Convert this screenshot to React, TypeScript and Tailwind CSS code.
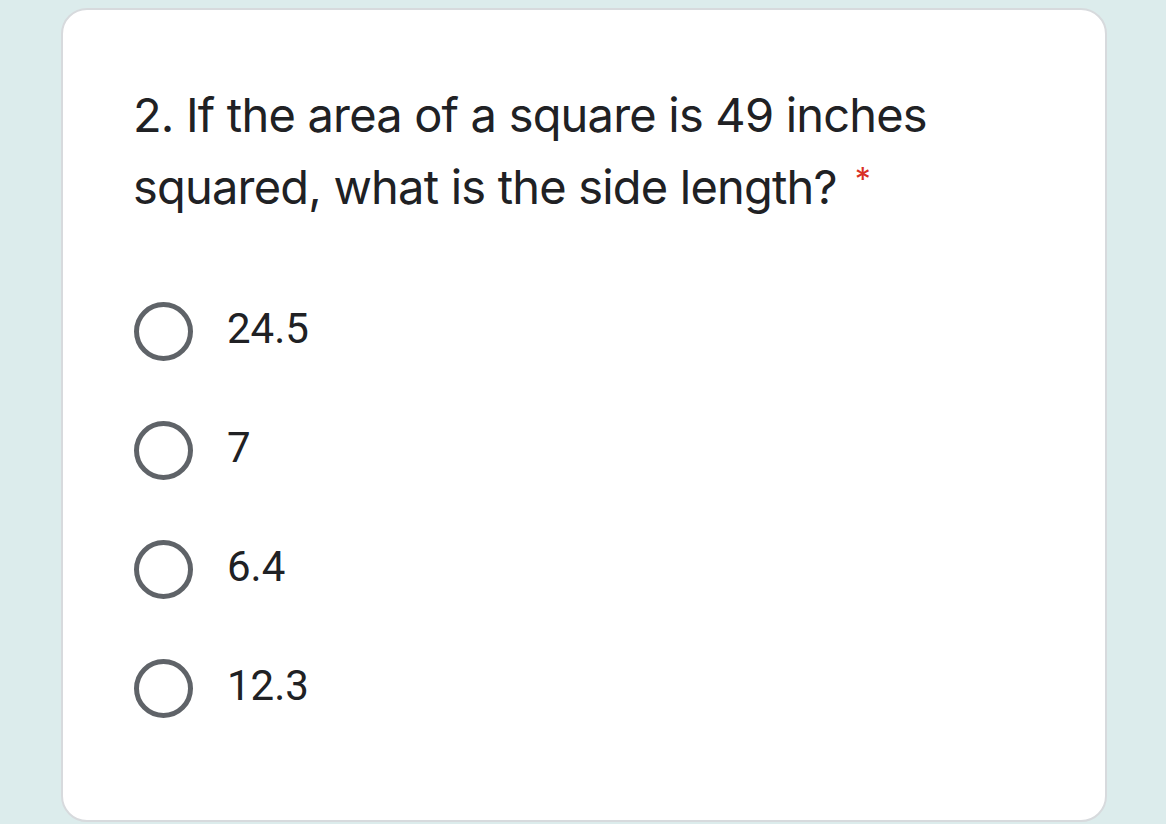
export default function App() {
  const options = ["24.5", "7", "6.4", "12.3"];
  return (
    <div className="w-[1166px] h-[824px] bg-[#dcecec] overflow-hidden pt-[8px] pl-[61px]">
      <div className="w-[1046px] h-[814px] bg-white rounded-[26px] border-2 border-[#d7dadd] pl-[70px] pt-[69px]">
        <div
          className="text-[#202124] text-[47px] leading-[72px] tracking-[-0.8px] w-[840px]"
          style={{ fontFamily: 'Inter, sans-serif' }}
        >
          2. If the area of a square is 49 inches squared, what is the side length?
          <span className="text-[#d93025] ml-[18px] align-top text-[32px] leading-[58px]">*</span>
        </div>
        <div className="mt-[79px] flex flex-col gap-[60px]">
          {options.map((o) => (
            <div key={o} className="flex items-center h-[59px]">
              <div className="ml-[1px] w-[59px] h-[59px] rounded-full border-[5px] border-[#5f6368] box-border shrink-0" />
              <span
                className="ml-[34px] -mt-[6px] text-[42px] text-[#202124] leading-none"
                style={{ fontFamily: 'Roboto, sans-serif' }}
              >
                {o}
              </span>
            </div>
          ))}
        </div>
      </div>
    </div>
  );
}
